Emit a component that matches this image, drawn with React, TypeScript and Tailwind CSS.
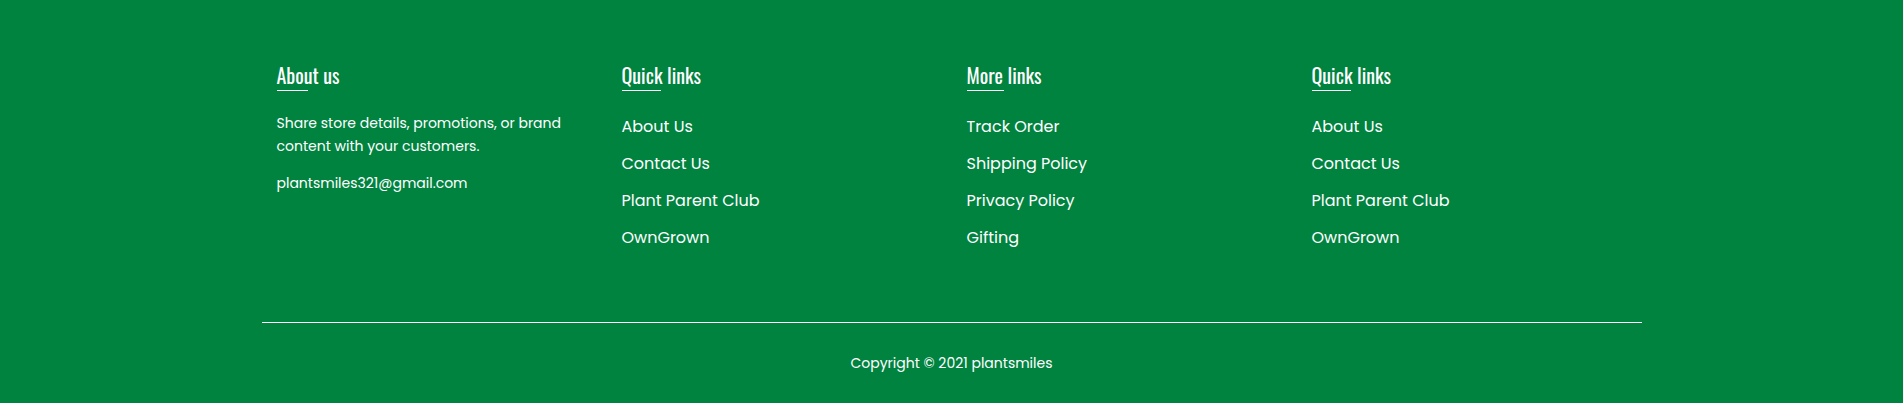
const quickLinks = ["About Us", "Contact Us", "Plant Parent Club", "OwnGrown"];
const moreLinks = ["Track Order", "Shipping Policy", "Privacy Policy", "Gifting"];

const heading = "font-['Oswald','Liberation_Sans_Narrow','DejaVu_Sans_Condensed',sans-serif] text-[20px] leading-[30px] [font-stretch:condensed]";

function Heading({ title }: { title: string }) {
  return (
    <div className="pb-[17px]">
      <div className="inline-block">
        <h3 className={heading}>{title}</h3>
        <div className="w-1/2 h-px bg-white" />
      </div>
    </div>
  );
}

function LinkList({ title, links }: { title: string; links: string[] }) {
  return (
    <div className="px-[15px]">
      <Heading title={title} />
      <ul className="flex flex-col">
        {links.map((l) => (
          <li key={l} className="text-[16px] leading-[37px] h-[37px]">
            <a href="#">{l}</a>
          </li>
        ))}
      </ul>
    </div>
  );
}

export default function App() {
  return (
    <div className="bg-white h-[406px]">
      <footer className="bg-[#00833f] text-white h-[403px] font-['Poppins','Inter','Noto_Sans',sans-serif]">
        <div className="w-[1380px] mx-auto pt-[60px]">
          <div className="grid grid-cols-4 h-[262px]">
            <div className="px-[15px]">
              <Heading title="About us" />
              <p className="text-[14px] leading-[22.5px] pt-[4px] w-[300px]">
                Share store details, promotions, or brand content with your customers.
              </p>
              <p className="text-[14px] leading-[22.5px] mt-[15px]">plantsmiles321@gmail.com</p>
            </div>
            <LinkList title="Quick links" links={quickLinks} />
            <LinkList title="More links" links={moreLinks} />
            <LinkList title="Quick links" links={quickLinks} />
          </div>
          <div className="h-px bg-white" />
          <p className="text-center text-[14px] leading-[20px] mt-[30px]">Copyright © 2021 plantsmiles</p>
        </div>
      </footer>
    </div>
  );
}
